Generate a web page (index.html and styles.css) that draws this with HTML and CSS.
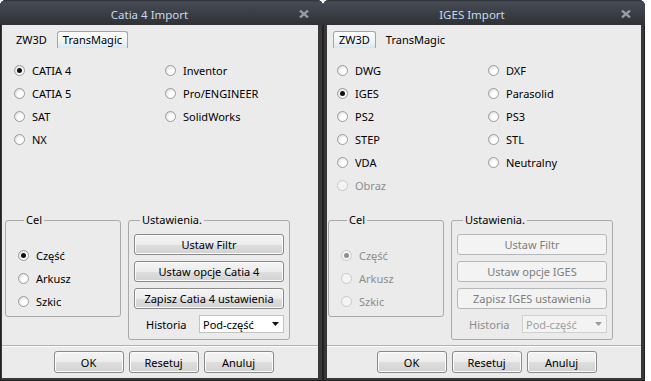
FILE: index.html
```html
<!DOCTYPE html>
<html lang="pl">
<head>
  <meta charset="UTF-8">
  <title>Import</title>
  <link rel="stylesheet" href="styles.css">
</head>
<body>
  <div class="desk">

    <!-- okno Catia 4 -->
    <div class="win win-catia">
      <div class="titlebar">
        <span class="title">Catia 4 Import</span>
        <svg class="close" width="10" height="8" viewBox="0 0 10 8"><path d="M1 .6 9 7.4M9 .6 1 7.4"/></svg>
      </div>
      <div class="client">
        <div class="tabs">
          <span class="tab">ZW3D</span>
          <span class="tab active">TransMagic</span>
        </div>
        <div class="options rows-4">
          <label class="opt on"><span class="radio"></span>CATIA 4</label>
          <label class="opt"><span class="radio"></span>CATIA 5</label>
          <label class="opt"><span class="radio"></span>SAT</label>
          <label class="opt"><span class="radio"></span>NX</label>
          <label class="opt"><span class="radio"></span>Inventor</label>
          <label class="opt"><span class="radio"></span>Pro/ENGINEER</label>
          <label class="opt"><span class="radio"></span>SolidWorks</label>
        </div>
        <div class="groups">
          <fieldset class="box box-cel">
            <legend>Cel</legend>
            <label class="opt on"><span class="radio"></span>Część</label>
            <label class="opt"><span class="radio"></span>Arkusz</label>
            <label class="opt"><span class="radio"></span>Szkic</label>
          </fieldset>
          <fieldset class="box box-set">
            <legend>Ustawienia.</legend>
            <button class="btn wide">Ustaw Filtr</button>
            <button class="btn wide">Ustaw opcje Catia 4</button>
            <button class="btn wide">Zapisz Catia 4 ustawienia</button>
            <div class="hist">
              <span class="hist-label">Historia</span>
              <div class="combo"><span>Pod-część</span><svg width="7" height="4" viewBox="0 0 7 4"><path d="M0 0h7L3.5 4z"/></svg></div>
            </div>
          </fieldset>
        </div>
        <div class="sep"></div>
        <div class="footer">
          <button class="btn">OK</button>
          <button class="btn">Resetuj</button>
          <button class="btn">Anuluj</button>
        </div>
      </div>
    </div>

    <!-- okno IGES -->
    <div class="win win-iges">
      <div class="titlebar">
        <span class="title">IGES Import</span>
        <svg class="close" width="10" height="8" viewBox="0 0 10 8"><path d="M1 .6 9 7.4M9 .6 1 7.4"/></svg>
      </div>
      <div class="client">
        <div class="tabs">
          <span class="tab active">ZW3D</span>
          <span class="tab">TransMagic</span>
        </div>
        <div class="options rows-6">
          <label class="opt"><span class="radio"></span>DWG</label>
          <label class="opt on"><span class="radio"></span>IGES</label>
          <label class="opt"><span class="radio"></span>PS2</label>
          <label class="opt"><span class="radio"></span>STEP</label>
          <label class="opt"><span class="radio"></span>VDA</label>
          <label class="opt off"><span class="radio"></span>Obraz</label>
          <label class="opt"><span class="radio"></span>DXF</label>
          <label class="opt"><span class="radio"></span>Parasolid</label>
          <label class="opt"><span class="radio"></span>PS3</label>
          <label class="opt"><span class="radio"></span>STL</label>
          <label class="opt"><span class="radio"></span>Neutralny</label>
        </div>
        <div class="groups">
          <fieldset class="box box-cel">
            <legend>Cel</legend>
            <label class="opt on off"><span class="radio"></span>Część</label>
            <label class="opt off"><span class="radio"></span>Arkusz</label>
            <label class="opt off"><span class="radio"></span>Szkic</label>
          </fieldset>
          <fieldset class="box box-set">
            <legend>Ustawienia.</legend>
            <button class="btn wide" disabled>Ustaw Filtr</button>
            <button class="btn wide" disabled>Ustaw opcje IGES</button>
            <button class="btn wide" disabled>Zapisz IGES ustawienia</button>
            <div class="hist off">
              <span class="hist-label">Historia</span>
              <div class="combo"><span>Pod-część</span><svg width="7" height="4" viewBox="0 0 7 4"><path d="M0 0h7L3.5 4z"/></svg></div>
            </div>
          </fieldset>
        </div>
        <div class="sep"></div>
        <div class="footer">
          <button class="btn">OK</button>
          <button class="btn">Resetuj</button>
          <button class="btn">Anuluj</button>
        </div>
      </div>
    </div>

  </div>
</body>
</html>
```

FILE: styles.css
```css
/* dwa okna dialogowe obok siebie */
body {
  margin: 0;
  background: #fff;
  font-family: "Noto Sans", sans-serif;
  font-size: 11px;
  color: #000;
}

.desk {
  display: flex;
  height: 381px;
}

.win {
  display: flex;
  flex-direction: column;
  height: 381px;
  background: #383838;
  border-radius: 6px 6px 0 0;
  box-shadow: inset 0 0 0 1px #222;
}

.win-catia { width: 323px; }
.win-iges { width: 322px; }

/* pasek tytułu */
.titlebar {
  display: flex;
  align-items: flex-start;
  height: 25px;
  flex: none;
  border-radius: 6px 6px 0 0;
  background: linear-gradient(#2c2f35 0, #454a54 2px, #3d4149 11px, #303134 25px);
}

.title {
  flex: 1;
  text-align: center;
  padding-top: 4px;
  line-height: 21px;
  font-size: 11.5px;
  color: #c4daf3;
}

.close {
  margin: 10px 14px 0 0;
}

.close path {
  stroke: #959ca5;
  stroke-width: 2.4;
  fill: none;
}

/* obszar roboczy */
.client {
  flex: 1;
  background: #ebebeb;
  margin: 0 5px 3px 2px;
  padding-top: 6px;
  padding-left: 3px;
  display: flex;
  flex-direction: column;
}

.win-iges .client {
  margin: 0 4px 3px 4px;
  padding-left: 1px;
}

/* zakładki */
.tabs {
  display: flex;
  gap: 4px;
  margin-left: 5px;
  height: 17px;
}

.tab {
  height: 16px;
  line-height: 15px;
  padding: 0 5px;
  border: 1px solid transparent;
  border-bottom: none;
}

.tab.active {
  border-color: #9aa6b0;
  border-radius: 3px 3px 0 0;
  background: linear-gradient(#fdfdfd, #f1f4f6 60%, #d6e7f2);
}

/* przyciski opcji */
.options {
  display: grid;
  grid-auto-flow: column;
  grid-template-columns: 151px 1fr;
  grid-auto-rows: 23px;
  align-content: start;
  height: 154px;
  margin: 11px 0 0 9px;
  flex: none;
}

.rows-4 { grid-template-rows: repeat(4, 23px); }
.rows-6 { grid-template-rows: repeat(6, 23px); }

.opt {
  display: flex;
  align-items: center;
  height: 23px;
}

.radio {
  width: 11px;
  height: 11px;
  box-sizing: border-box;
  border-radius: 50%;
  border: 1px solid #9b9b9b;
  background: radial-gradient(circle at 65% 65%, #fff 35%, #cfcfcf 100%);
  margin-right: 7px;
  display: flex;
  align-items: center;
  justify-content: center;
  flex: none;
}

.opt.on .radio::after {
  content: "";
  width: 5px;
  height: 5px;
  border-radius: 50%;
  background: #111;
}

.opt.off { color: #8d8d8d; }
.opt.off .radio { border-color: #c8c8c8; background: #f4f4f4; }
.opt.off.on .radio::after { background: #8e8e8e; }

/* grupy */
.groups {
  display: flex;
  gap: 7px;
  align-items: flex-start;
}

.box {
  margin: 0;
  padding: 0;
  min-width: 0;
  border: 1px solid #aaa;
  border-radius: 3px;
  box-sizing: border-box;
}

.box legend {
  padding: 0 2px;
  margin-left: 6px;
  line-height: 14px;
}

.box-cel {
  width: 116px;
  height: 104px;
  padding: 17px 0 0 12px;
}

.box-set {
  width: 162px;
  height: 127px;
  padding: 7px 5px 0 5px;
  display: flex;
  flex-direction: column;
  gap: 6px;
}

/* przyciski */
.btn {
  font-family: "Noto Sans", sans-serif;
  font-size: 11px;
  color: #000;
  height: 22px;
  width: 70px;
  padding: 0;
  border: 1px solid #8a8a8a;
  border-radius: 3px;
  background: linear-gradient(#f4f4f4 0, #ececec 50%, #dedede 51%, #d2d2d2 100%);
  box-shadow: inset 0 0 0 1px #fbfbfb;
}

.btn.wide {
  width: 100%;
  height: 21px;
}

.btn:disabled {
  color: #7d7d7d;
  border-color: #b5b8ba;
  background: #f3f3f3;
  box-shadow: none;
}

.hist {
  display: flex;
  align-items: center;
  height: 18px;
}

.hist-label {
  width: 53px;
  padding-left: 12px;
}

.combo {
  flex: 1;
  height: 18px;
  box-sizing: border-box;
  border: 1px solid #c3c3c3;
  background: #fff;
  display: flex;
  align-items: center;
  justify-content: space-between;
  padding: 0 3px 0 3px;
}

.combo svg { fill: #111; margin-right: 1px; }

.hist.off .hist-label { color: #8d8d8d; }
.hist.off .combo { background: #f3f3f3; border-color: #d0d0d0; color: #a0a0a0; }
.hist.off .combo svg { fill: #9a9a9a; }

/* dół okna */
.sep {
  height: 1px;
  margin-top: 5px;
  background: #b2b2b2;
  border-bottom: 1px solid #fafafa;
  margin-left: -3px;
}

.win-iges .sep { margin-left: -1px; }

.footer {
  display: flex;
  justify-content: center;
  gap: 5px;
  padding: 4px 0 0 4px;
}
```
